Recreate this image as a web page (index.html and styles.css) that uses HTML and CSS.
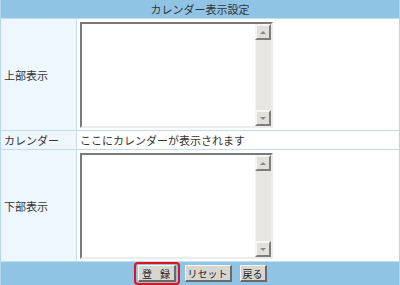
FILE: index.html
```html
<!DOCTYPE html>
<html lang="ja">
<head>
    <meta charset="UTF-8">
    <title>カレンダー表示設定</title>
    <link rel="stylesheet" href="styles.css">
</head>
<body>

<form class="settings">
    <div class="head">カレンダー表示設定</div>

    <div class="label">上部表示</div>
    <div class="field">
        <div class="textbox">
            <textarea name="top"></textarea>
            <div class="scrollbar">
                <span class="arrow up"></span>
                <span class="track"></span>
                <span class="arrow down"></span>
            </div>
        </div>
    </div>

    <div class="label short">カレンダー</div>
    <div class="field short">ここにカレンダーが表示されます</div>

    <div class="label">下部表示</div>
    <div class="field">
        <div class="textbox">
            <textarea name="bottom"></textarea>
            <div class="scrollbar">
                <span class="arrow up"></span>
                <span class="track"></span>
                <span class="arrow down"></span>
            </div>
        </div>
    </div>

    <div class="foot">
        <span class="focus"><button type="button" class="btn wide">登 録</button></span>
        <button type="reset" class="btn">リセット</button>
        <button type="button" class="btn">戻る</button>
    </div>
</form>

</body>
</html>
```

FILE: styles.css
```css
body {
    margin: 0;
    font-family: "Noto Sans CJK JP", "Noto Sans", sans-serif;
    font-size: 11px;
    color: #333;
    background: white;
}
.settings {
    width: 398px;
    display: grid;
    grid-template-columns: 75px 1fr;
    gap: 1px;
    background: #c2ddf1;
    border-left: 1px solid #b6d6ee;
    border-right: 1px solid #b6d6ee;
}
.head {
    grid-column: 1 / 3;
    height: 18px;
    line-height: 18px;
    text-align: center;
    background: #90c4e5;
}
.label {
    background: #eff7fe;
    display: flex;
    align-items: center;
    padding-left: 3px;
    height: 111px;
}
.field {
    background: white;
    padding: 3px 0 2px 3px;
    height: 106px;
}
.label.short, .field.short {
    height: 18px;
}
.field.short {
    padding: 0 0 0 3px;
    line-height: 18px;
}
.textbox {
    width: 189px;
    height: 102px;
    display: flex;
    border-top: 2px solid #7a7a7a;
    border-left: 2px solid #7a7a7a;
    border-right: 2px solid #ececec;
    border-bottom: 2px solid #ececec;
}
.textbox textarea {
    flex: 1;
    border: none;
    resize: none;
    padding: 0;
    margin: 0;
    outline: none;
    font: inherit;
}
.scrollbar {
    width: 16px;
    display: flex;
    flex-direction: column;
    background: #e8e6e1;
}
.scrollbar .track {
    flex: 1;
    border-left: 1px solid #f4f3f0;
}
.arrow {
    height: 12px;
    width: 12px;
    background: #e2e0db;
    border-top: 2px solid #f6f6f4;
    border-left: 2px solid #f6f6f4;
    border-right: 2px solid #7d7d7d;
    border-bottom: 2px solid #7d7d7d;
    display: flex;
    align-items: center;
    justify-content: center;
}
.arrow::after {
    content: "";
    border-left: 3px solid transparent;
    border-right: 3px solid transparent;
}
.arrow.up::after {
    border-bottom: 3px solid #888;
}
.arrow.down::after {
    border-top: 3px solid #888;
}
.foot {
    grid-column: 1 / 3;
    height: 23px;
    background: #90c4e5;
    display: flex;
    justify-content: center;
    align-items: center;
    gap: 8px;
}
.btn {
    height: 17px;
    padding: 0 2px;
    font: inherit;
    font-size: 10px;
    color: #222;
    white-space: nowrap;
    background: #d8d6d0;
    border-top: 1px solid #f8f8f8;
    border-left: 1px solid #f8f8f8;
    border-right: 2px solid #6a6a6a;
    border-bottom: 2px solid #6a6a6a;
    line-height: 13px;
}
.btn.wide {
    width: 38px;
    word-spacing: 6px;
}
.focus {
    display: flex;
    padding: 1px 2px;
    border: 2px solid #e0121b;
    border-radius: 4px;
    margin-right: -3px;
}
```
